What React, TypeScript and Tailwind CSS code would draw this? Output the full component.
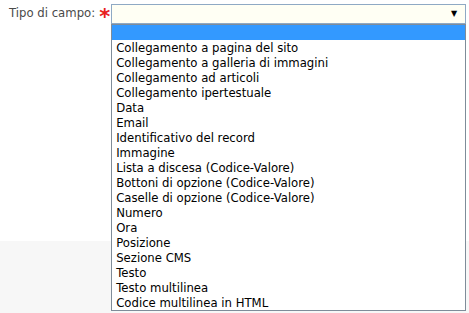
const options = [
  "Collegamento a pagina del sito",
  "Collegamento a galleria di immagini",
  "Collegamento ad articoli",
  "Collegamento ipertestuale",
  "Data",
  "Email",
  "Identificativo del record",
  "Immagine",
  "Lista a discesa (Codice-Valore)",
  "Bottoni di opzione (Codice-Valore)",
  "Caselle di opzione (Codice-Valore)",
  "Numero",
  "Ora",
  "Posizione",
  "Sezione CMS",
  "Testo",
  "Testo multilinea",
  "Codice multilinea in HTML",
];

export default function App() {
  return (
    <div className="w-[469px] h-[313px] overflow-hidden bg-white font-['DejaVu_Sans',sans-serif] text-[11.7px] flex flex-col">
      <div className="h-[241px] bg-white pt-[4px] pl-[9px] flex items-start">
        <label className="flex items-center h-[20px] text-[#4a4a4a] whitespace-nowrap">
          Tipo di campo:
          <span className="ml-[4px] text-[#e8201c] font-bold text-[21px] leading-none mt-[7px]">*</span>
        </label>
        <div className="relative ml-[1px]">
          <div className="w-[355px] h-[20px] border border-[#8fa9c4] bg-[#fffff4] flex items-center justify-end pr-[8px]">
            <span className="text-[8px] text-black leading-none">▼</span>
          </div>
          <ul className="absolute left-0 top-[20px] w-[355px] border border-[#7f8c99] bg-white text-black z-10">
            <li className="h-[15px] bg-[#3399ff]" />
            {options.map((o) => (
              <li key={o} className="h-[15px] leading-[16px] pl-[4px] whitespace-nowrap">
                {o}
              </li>
            ))}
          </ul>
        </div>
      </div>
      <div className="flex-1 bg-[#f7f7f7]" />
    </div>
  );
}
